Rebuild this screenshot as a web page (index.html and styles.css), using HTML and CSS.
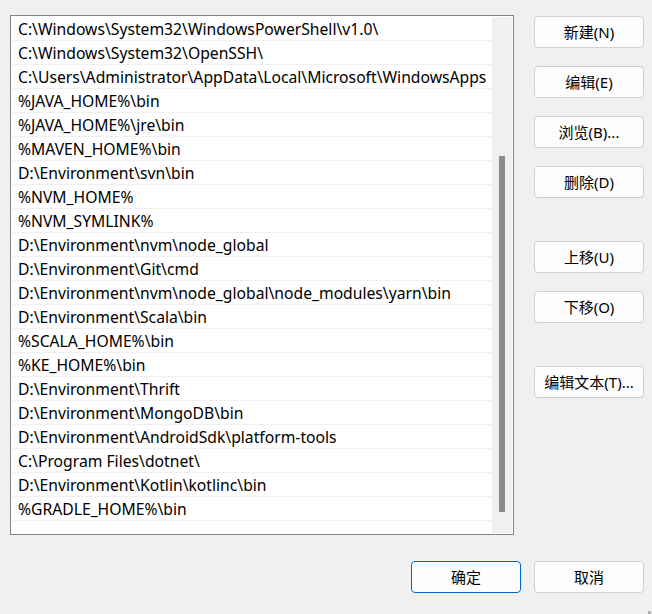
FILE: index.html
```html
<!DOCTYPE html>
<html lang="zh-CN">
<head>
<meta charset="utf-8">
<title>编辑环境变量</title>
<link rel="stylesheet" href="styles.css">
</head>
<body>
<div class="dialog">
  <div class="main">
    <div class="list">
      <ul class="rows">
        <li class="row">C:\Windows\System32\WindowsPowerShell\v1.0\</li>
        <li class="row">C:\Windows\System32\OpenSSH\</li>
        <li class="row">C:\Users\Administrator\AppData\Local\Microsoft\WindowsApps</li>
        <li class="row">%JAVA_HOME%\bin</li>
        <li class="row">%JAVA_HOME%\jre\bin</li>
        <li class="row">%MAVEN_HOME%\bin</li>
        <li class="row">D:\Environment\svn\bin</li>
        <li class="row">%NVM_HOME%</li>
        <li class="row">%NVM_SYMLINK%</li>
        <li class="row">D:\Environment\nvm\node_global</li>
        <li class="row">D:\Environment\Git\cmd</li>
        <li class="row">D:\Environment\nvm\node_global\node_modules\yarn\bin</li>
        <li class="row">D:\Environment\Scala\bin</li>
        <li class="row">%SCALA_HOME%\bin</li>
        <li class="row">%KE_HOME%\bin</li>
        <li class="row">D:\Environment\Thrift</li>
        <li class="row">D:\Environment\MongoDB\bin</li>
        <li class="row">D:\Environment\AndroidSdk\platform-tools</li>
        <li class="row">C:\Program Files\dotnet\</li>
        <li class="row">D:\Environment\Kotlin\kotlinc\bin</li>
        <li class="row">%GRADLE_HOME%\bin</li>
      </ul>
      <div class="scrollbar"><div class="thumb"></div></div>
    </div>
    <div class="actions">
      <div class="group">
        <button class="btn">新建(N)</button>
        <button class="btn">编辑(E)</button>
        <button class="btn">浏览(B)...</button>
        <button class="btn">删除(D)</button>
      </div>
      <div class="group">
        <button class="btn">上移(U)</button>
        <button class="btn">下移(O)</button>
      </div>
      <div class="group">
        <button class="btn">编辑文本(T)...</button>
      </div>
    </div>
  </div>
  <div class="footer">
    <button class="btn btn-default">确定</button>
    <button class="btn">取消</button>
  </div>
  <div class="grip"></div>
</div>
</body>
</html>
```

FILE: styles.css
```css
html, body {
  margin: 0;
  padding: 0;
  background: #f0f0f0;
}

body {
  width: 652px;
  height: 614px;
  overflow: hidden;
  font-family: "Noto Sans", "Noto Sans CJK SC", sans-serif;
  color: #000;
}

.dialog {
  position: relative;
  box-sizing: border-box;
  width: 652px;
  height: 614px;
  padding: 15px 8px 0 10px;
  display: flex;
  flex-direction: column;
}

.main {
  display: flex;
  gap: 20px;
}

.list {
  box-sizing: border-box;
  width: 504px;
  height: 520px;
  border: 1px solid #848484;
  padding: 1px;
  background: #fff;
  display: flex;
}

.rows {
  list-style: none;
  margin: 0;
  padding: 0;
  flex: 1;
  overflow: hidden;
}

.row {
  box-sizing: border-box;
  height: 24px;
  line-height: 23px;
  padding: 1px 0 0 6px;
  border-bottom: 1px solid #f0f0f0;
  font-size: 15.7px;
  white-space: nowrap;
  overflow: hidden;
}

.scrollbar {
  width: 20px;
  background: #f0f0f0;
  display: flex;
  flex-direction: column;
  align-items: center;
  padding-top: 139px;
  padding-bottom: 21px;
  box-sizing: border-box;
}

.thumb {
  width: 6px;
  flex: 1;
  background: #8a8a8a;
  border-radius: 1px;
}

.actions {
  display: flex;
  flex-direction: column;
  gap: 43px;
  padding-top: 1px;
}

.group {
  display: flex;
  flex-direction: column;
  gap: 18px;
}

.btn {
  box-sizing: border-box;
  width: 110px;
  height: 32px;
  background: #fdfdfd;
  border: 1px solid #d0d0d0;
  border-radius: 4px;
  font-family: "Noto Sans", "Noto Sans CJK SC", sans-serif;
  font-size: 15px;
  color: #000;
  padding: 0;
  line-height: 30px;
}

.btn-default {
  border-color: #0067c0;
}

.footer {
  display: flex;
  justify-content: flex-end;
  gap: 13px;
  margin-top: 26px;
}

.grip {
  position: absolute;
  right: 1px;
  bottom: 0;
  width: 3px;
  height: 3px;
  background: #b4b4b4;
}
```
